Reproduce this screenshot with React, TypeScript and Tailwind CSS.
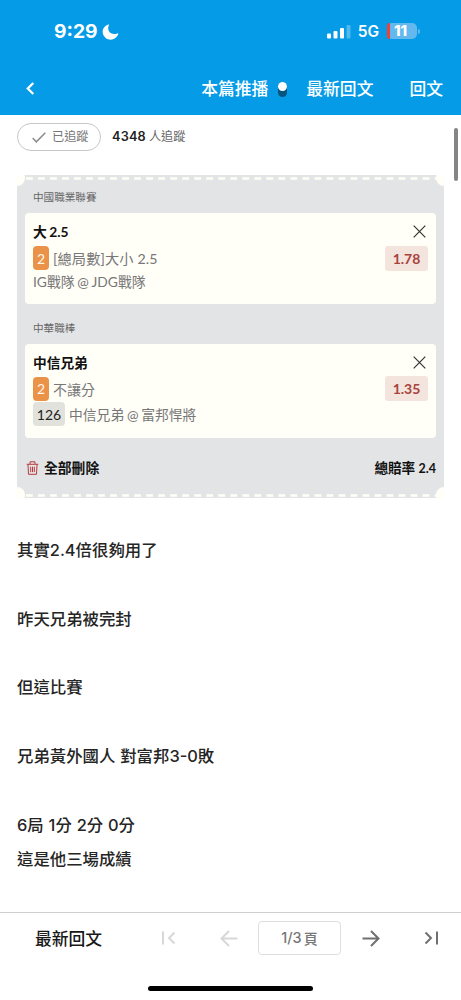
import React from "react";

const posts = ["其實2.4倍很夠用了", "", "昨天兄弟被完封", "", "但這比賽", "", "兄弟黃外國人 對富邦3-0敗", "", "6局 1分 2分 0分", "這是他三場成績"];

function StatusBar() {
  return (
    <div className="flex h-[62px] items-center justify-between pl-[54px] pr-[41px]">
      <div className="flex items-center gap-1">
        <span className="text-[19.3px] font-bold leading-6">9:29</span>
        <svg className="mt-[1px]" width="17" height="16" viewBox="0 0 17 16" fill="white">
          <path d="M6.2.4C-.3 2.3-1.2 10.6 4 14.2c4.300 3 10.600 1.200 12.300-4.100.2-.6-.3-1-.9-.7C9.200 11.700 4.500 7.300 6.800 1.300c.3-.6.1-1.100-.6-.9Z" />
        </svg>
      </div>
      <div className="flex items-center">
        <svg width="25" height="15" viewBox="0 0 25 15" fill="white">
          <rect x="1" y="9.500" width="4" height="5" rx="1" />
          <rect x="7.500" y="7" width="4" height="7.500" rx="1" />
          <rect x="14" y="4" width="4" height="10.500" rx="1" />
          <rect x="20.500" y="1" width="4" height="13.500" rx="1" opacity=".3" />
        </svg>
        <span className="ml-[7px] mt-[2px] text-[15.5px] font-semibold leading-5">5G</span>
        <span className="ml-[8px] flex h-4 w-[30px] items-center rounded-[5px] bg-[#63b9ed] text-[15px] font-extrabold">
          <span className="h-4 w-[3px] rounded-l-[5px] bg-[#ee4037]" />
          <span className="ml-[4px] leading-5">11</span>
        </span>
        <span className="ml-[1px] h-[5px] w-[2px] rounded-r bg-[#63b9ed]" />
      </div>
    </div>
  );
}

function Dashes() {
  return (
    <svg className="mx-2 h-[3px] w-[411px]" viewBox="0 0 411 3">
      <path d="M1 1.500H411" stroke="#fffff8" strokeWidth="2.300" strokeDasharray="6.8 5.22" />
    </svg>
  );
}

function Close() {
  return (
    <svg width="13" height="13" viewBox="0 0 13 13" stroke="#333" strokeWidth="1.2" fill="none">
      <path d="M.7.7 12.3 12.3M12.3.7.7 12.3" />
    </svg>
  );
}

function Odds({ value }: { value: string }) {
  return <span className="flex h-[25px] w-[43px] items-center justify-center rounded-[3px] bg-[#f4e4de] text-[14px] font-bold text-[#a8433c]">{value}</span>;
}

function Count() {
  return <span className="mr-[4px] flex h-6 w-4 items-center justify-center rounded-[4px] bg-[#e99248] text-[14px] text-[#fff6e8]">2</span>;
}

function Ticket() {
  return (
    <section className="relative ml-[17px] mt-[24px] h-[323px] w-[427px] overflow-hidden bg-[#e3e4e6] pt-[2px] font-['Lato','Noto_Sans_CJK_TC',sans-serif] text-[14px]">
      <span className="absolute -left-[8px] -top-[5px] size-4 rounded-full bg-[#fffff8]" />
      <span className="absolute -right-[8px] -top-[5px] size-4 rounded-full bg-[#fffff8]" />
      <span className="absolute -bottom-[5px] -left-[8px] size-4 rounded-full bg-[#fffff8]" />
      <span className="absolute -bottom-[5px] -right-[8px] size-4 rounded-full bg-[#fffff8]" />
      <Dashes />
      <h3 className="ml-4 mt-[9px] h-[24px] text-[10.6px] leading-[17px] text-[#666]">中國職業聯賽</h3>
      <article className="mx-2 h-[91px] rounded-[4px] bg-[#fffef7] px-2 pt-[5px]">
        <div className="flex h-[27px] items-center justify-between pr-[2px]">
          <strong className="text-[13.8px] leading-6 text-[#111] [word-spacing:-1px]">大 2.5</strong>
          <Close />
        </div>
        <div className="flex h-[26px] items-center">
          <Count />
          <span className="flex-1 pt-[2px] text-[14.2px] tracking-[0.15px] text-[#777]">[總局數]大小 2.5</span>
          <Odds value="1.78" />
        </div>
        <p className="h-[22px] text-[13.8px] leading-[21px] text-[#777] [word-spacing:-0.8px]">IG戰隊 @ JDG戰隊</p>
      </article>
      <h3 className="ml-4 mt-[15px] h-[24px] text-[10.6px] leading-[18px] text-[#666]">中華職棒</h3>
      <article className="mx-2 mt-[1px] h-[94px] rounded-[4px] bg-[#fffef7] px-2 pt-[5px]">
        <div className="flex h-[26px] items-center justify-between pr-[2px]">
          <strong className="pt-[2px] text-[13.7px] leading-6 text-[#111]">中信兄弟</strong>
          <Close />
        </div>
        <div className="flex h-[27px] items-center">
          <Count />
          <span className="flex-1 pt-[1px] text-[#777]">不讓分</span>
          <Odds value="1.35" />
        </div>
        <div className="flex h-[24px] items-center">
          <span className="mr-[4px] flex h-6 w-[32px] items-center justify-center rounded-[4px] bg-[#e2e2dd] text-[#222]">126</span>
          <span className="pt-[2px] text-[13.8px] text-[#777] [word-spacing:-0.8px]">中信兄弟 @ 富邦悍將</span>
        </div>
      </article>
      <div className="mx-2 mt-[18px] flex h-6 items-center justify-between text-[#111]">
        <div className="flex items-center">
          <svg className="ml-[1px] mr-[5px]" width="13" height="14" viewBox="0 0 13 14" fill="none" stroke="#b83a3a" strokeWidth="1">
            <path d="M.7 3.3h11.6M4 3V.8h5V3M2 3.5l.5 9.8h8l.5-9.8M4.7 5.7v5.4M6.5 5.7v5.4M8.3 5.7v5.4" />
          </svg>
          <strong className="text-[13.8px] leading-6">全部刪除</strong>
        </div>
        <strong className="text-[13.6px] leading-6">總賠率 <span className="text-[12.5px]">2.4</span></strong>
      </div>
      <div className="mt-[14px] flex"><Dashes /></div>
    </section>
  );
}

export default function App() {
  return (
    <div className="flex h-[1000px] w-[461px] flex-col overflow-hidden bg-white font-['Inter','Noto_Sans_CJK_TC',sans-serif]">
      <header className="h-[115px] shrink-0 bg-[#059be7] text-white">
        <StatusBar />
        <nav className="flex h-[53px] items-center pl-[26px] pr-[18px] pt-[2px] text-[16.8px] font-medium">
          <svg className="mb-[2px]" width="9" height="13" viewBox="0 0 9 13" fill="none" stroke="white" strokeWidth="2.3">
            <path d="M7.3 1 1.8 6.5 7.3 12" />
          </svg>
          <span className="ml-auto">本篇推播</span>
          <span className="ml-[9px] mr-[-1px] h-[15px] w-[9px] translate-x-[1px] rounded-full bg-[#07547e]">
            <span className="block size-[9px] rounded-full bg-white" />
          </span>
          <span className="ml-[21px]">最新回文</span>
          <span className="ml-9">回文</span>
        </nav>
      </header>
      <main className="relative h-[797px] shrink-0 overflow-hidden">
        <span className="absolute right-[3px] top-[13px] h-[53px] w-[4px] rounded-full bg-[#858585]" />
        <div className="ml-[17px] mt-2 flex h-7 items-center text-[12.2px] text-[#777]">
          <div className="flex h-7 w-[84px] items-center rounded-full border border-[#c7c7c7] pl-[14px]">
            <svg width="14" height="11" viewBox="0 0 14 11" fill="none" stroke="#8b8b8b" strokeWidth="1.5"><path d="m.7 6 3.6 3.8L13.3.7" /></svg>
            <span className="ml-[6px] pt-[1px]">已追蹤</span>
          </div>
          <span className="ml-[11px] text-[12.7px] font-semibold tracking-[0.2px] text-[#222]">4348</span>
          <span className="ml-[3px] pt-[1px] text-[#666]">人追蹤</span>
        </div>
        <Ticket />
        <div className="ml-[17px] mt-[35px] text-[16.4px] font-medium leading-[34.35px] text-[#252525]">
          {posts.map((line, index) => <p key={index} className="h-[34.35px] [word-spacing:0.5px]">{line}</p>)}
        </div>
      </main>
      <footer className="h-[88px] shrink-0 border-t border-[#cfcfcf]">
        <div className="flex h-[50px] items-center pl-[35px]">
          <span className="w-[126px] pt-[3px] text-[16.8px] font-medium text-[#181818]">最新回文</span>
          <svg width="15" height="14" viewBox="0 0 15 14" fill="none" stroke="#d8d8d8" strokeWidth="2"><path d="M2 .5v13M13.5 1.5 8 7l5.5 5.5" /></svg>
          <svg className="ml-[44px]" width="18" height="17" viewBox="0 0 18 17" fill="none" stroke="#d8d8d8" strokeWidth="2"><path d="M17.5 8.5H2M9 1 1.5 8.500 9 16" /></svg>
          <span className="ml-5 flex h-[34px] w-[83px] items-center justify-center rounded-[4px] border border-[#dedede] text-[14.4px] font-medium text-[#777]">1/3<span className="ml-[2px] text-[14px]">頁</span></span>
          <svg className="ml-[21px]" width="18" height="17" viewBox="0 0 18 17" fill="none" stroke="#707070" strokeWidth="2"><path d="M.5 8.5H16M9 1l7.5 7.5L9 16" /></svg>
          <svg className="ml-[44px]" width="15" height="14" viewBox="0 0 15 14" fill="none" stroke="#707070" strokeWidth="2"><path d="M1.5 1.5 7 7l-5.5 5.5M13 .5v13" /></svg>
        </div>
        <div className="ml-[148px] mt-[23px] h-[5px] w-[165px] rounded-full bg-black" />
      </footer>
    </div>
  );
}
